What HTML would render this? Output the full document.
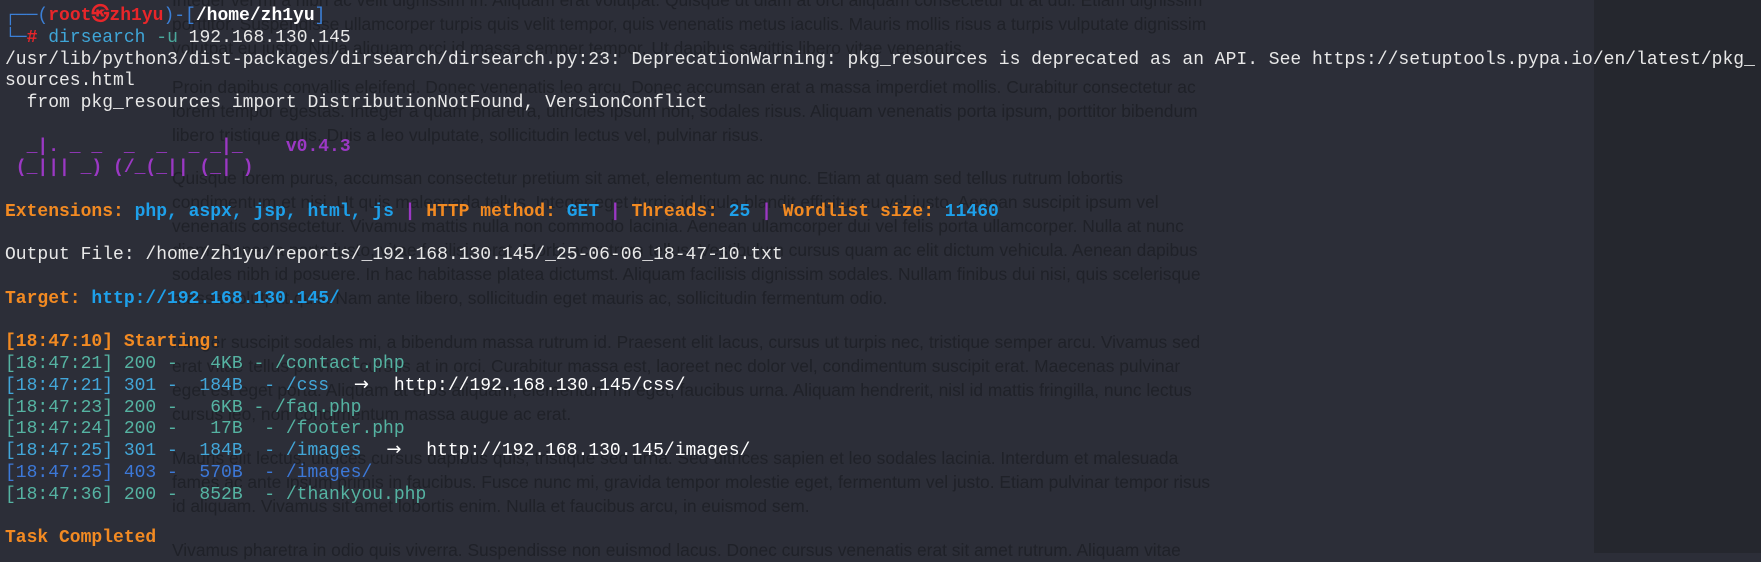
<!DOCTYPE html>
<html><head><meta charset="utf-8">
<style>
html,body{margin:0;padding:0;}
body{width:1761px;height:553px;overflow:hidden;background:#2c2e38;position:relative;}
#right{position:absolute;left:1594px;top:0;width:167px;height:553px;background:#25272e;}
.lp{position:absolute;left:172px;margin:0;font-family:"Liberation Sans",sans-serif;font-size:17.4px;line-height:24px;color:#1f2128;white-space:nowrap;}
pre{position:absolute;left:5px;top:6px;margin:0;font-family:"Liberation Mono",monospace;font-size:18px;line-height:21.75px;color:#e8e8e8;}
.b{color:#3b7fd6}.r{color:#e8262a;font-weight:bold}.w{color:#fff;font-weight:bold}
.c{color:#3fa6d8}.t{color:#4aa89c}.p{color:#9b38c4;font-weight:bold}
.o{color:#f28a22;font-weight:bold}.u{color:#1ea0ea;font-weight:bold}
.g{color:#55b3a2}.lb{color:#42a6d8}.bl{color:#3c78d8}.wh{color:#fff}
.ar{display:inline-block;width:21.6px;overflow:visible;text-align:center;color:#fff;font-family:"DejaVu Sans",sans-serif;font-size:18px;line-height:10px;}
</style></head><body>
<div id="right"></div>
<p class="lp" style="top:-12px">Integer vel mi a nibh ac velit dignissim in. Aliquam erat volutpat. Quisque ut diam at orci aliquam consectetur ut at dui. Etiam dignissim<br>porttitor. Suspendisse ullamcorper turpis quis velit tempor, quis venenatis metus iaculis. Mauris mollis risus a turpis vulputate dignissim<br>volutpat eu justo. Nulla aliquam orci id massa semper tempor. Ut dapibus sagittis libero vitae venenatis.</p>
<p class="lp" style="top:75px">Proin dapibus convallis eleifend. Donec venenatis leo arcu. Donec accumsan erat a massa imperdiet mollis. Curabitur consectetur ac<br>lorem tempor egestas. Integer a quam pharetra, ultricies ipsum non, sodales risus. Aliquam venenatis porta ipsum, porttitor bibendum<br>libero tristique quis. Duis a leo vulputate, sollicitudin lectus vel, pulvinar risus.</p>
<p class="lp" style="top:166px">Quisque lorem purus, accumsan consectetur pretium sit amet, elementum ac nunc. Etiam at quam sed tellus rutrum lobortis<br>condimentum et nisi. Ut quis malesuada tellus. Integer eget turpis id ligula blandit efficitur eu vel justo. Aenean suscipit ipsum vel<br>venenatis consectetur. Vivamus mattis nulla non commodo lacinia. Aenean ullamcorper dui vel felis porta ullamcorper. Nulla at nunc<br>diam. Donec a porta justo, vitae facilisis erat. Morbi ac rutrum tellus. Vestibulum cursus quam ac elit dictum vehicula. Aenean dapibus<br>sodales nibh id posuere. In hac habitasse platea dictumst. Aliquam facilisis dignissim sodales. Nullam finibus dui nisi, quis scelerisque<br>massa volutpat quis. Nam ante libero, sollicitudin eget mauris ac, sollicitudin fermentum odio.</p>
<p class="lp" style="top:330px">Integer suscipit sodales mi, a bibendum massa rutrum id. Praesent elit lacus, cursus ut turpis nec, tristique semper arcu. Vivamus sed<br>erat vitae tellus pulvinar cursus at in orci. Curabitur massa est, laoreet nec dolor vel, condimentum suscipit erat. Maecenas pulvinar<br>eget est eget porta. Aliquam at eros aliquam, elementum mi eget, faucibus urna. Aliquam hendrerit, nisl id mattis fringilla, nunc lectus<br>cursus leo, non condimentum massa augue ac erat.</p>
<p class="lp" style="top:446px">Mauris elit lectus, ultrices cursus dapibus quis, tristique sed urna. Sed ultrices sapien et leo sodales lacinia. Interdum et malesuada<br>fames ac ante ipsum primis in faucibus. Fusce nunc mi, gravida tempor molestie eget, fermentum vel justo. Etiam pulvinar tempor risus<br>id aliquam. Vivamus sit amet lobortis enim. Nulla et faucibus arcu, in euismod sem.</p>
<p class="lp" style="top:538px">Vivamus pharetra in odio quis viverra. Suspendisse non euismod lacus. Donec cursus venenatis erat sit amet rutrum. Aliquam vitae</p>
<pre><span class="b">┌──(</span><span class="r">root㉿zh1yu</span><span class="b">)-[</span><span class="w">/home/zh1yu</span><span class="b">]</span>
<span class="b">└─</span><span class="r">#</span> <span class="c">dirsearch</span> <span class="t">-u</span> 192.168.130.145
/usr/lib/python3/dist-packages/dirsearch/dirsearch.py:23: DeprecationWarning: pkg_resources is deprecated as an API. See https://setuptools.pypa.io/en/latest/pkg_
sources.html
  from pkg_resources import DistributionNotFound, VersionConflict

<span class="p">  _|. _ _  _  _  _ _|_    v0.4.3</span>
<span class="p"> (_||| _) (/_(_|| (_| )</span>

<span class="o">Extensions: </span><span class="u">php, aspx, jsp, html, js</span><span class="p"> | </span><span class="o">HTTP method: </span><span class="u">GET</span><span class="p"> | </span><span class="o">Threads: </span><span class="u">25</span><span class="p"> | </span><span class="o">Wordlist size: </span><span class="u">11460</span>

Output File: /home/zh1yu/reports/_192.168.130.145/_25-06-06_18-47-10.txt

<span class="o">Target: </span><span class="u">http://192.168.130.145/</span>

<span class="o">[18:47:10] Starting: </span>
<span class="g">[18:47:21] 200 -   4KB - /contact.php</span>
<span class="lb">[18:47:21] 301 -  184B  - /css  </span><span class="ar">→</span><span class="wh">  http://192.168.130.145/css/</span>
<span class="g">[18:47:23] 200 -   6KB - /faq.php</span>
<span class="g">[18:47:24] 200 -   17B  - /footer.php</span>
<span class="lb">[18:47:25] 301 -  184B  - /images  </span><span class="ar">→</span><span class="wh">  http://192.168.130.145/images/</span>
<span class="bl">[18:47:25] 403 -  570B  - /images/</span>
<span class="g">[18:47:36] 200 -  852B  - /thankyou.php</span>

<span class="o">Task Completed</span></pre>
</body></html>
